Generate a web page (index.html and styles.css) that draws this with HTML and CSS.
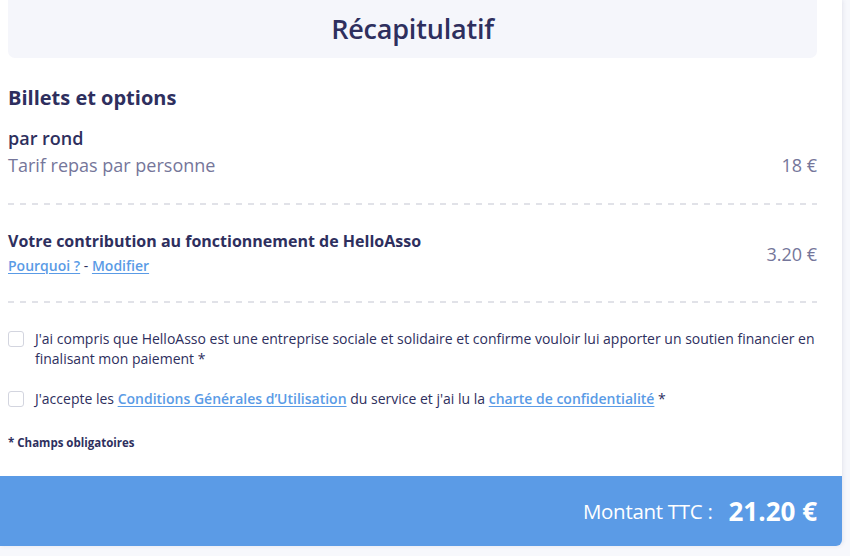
FILE: index.html
```html
<!DOCTYPE html>
<html lang="fr">
<head>
<meta charset="utf-8">
<link rel="stylesheet" href="styles.css">
</head>
<body>
<div class="card">
  <div class="header"><h1 class="title">Récapitulatif</h1></div>
  <div class="content">
    <h2 class="section-title">Billets et options</h2>
    <div class="item">
      <div class="item-name">par rond</div>
      <div class="row">
        <span class="muted">Tarif repas par personne</span>
        <span class="muted">18 €</span>
      </div>
    </div>
    <div class="dash dash-first"></div>
    <div class="row contrib">
      <div>
        <div class="contrib-title">Votre contribution au fonctionnement de HelloAsso</div>
        <div class="links"><a href="#">Pourquoi ?</a> - <a href="#">Modifier</a></div>
      </div>
      <span class="muted">3.20 €</span>
    </div>
    <div class="dash dash-second"></div>
    <label class="check">
      <span class="box"></span>
      <span class="check-text">J'ai compris que HelloAsso est une entreprise sociale et solidaire et confirme vouloir lui apporter un soutien financier en finalisant mon paiement *</span>
    </label>
    <label class="check">
      <span class="box"></span>
      <span class="check-text">J'accepte les <a href="#">Conditions Générales d’Utilisation</a> du service et j'ai lu la <a href="#">charte de confidentialité</a> *</span>
    </label>
    <p class="required">* Champs obligatoires</p>
  </div>
  <div class="footer">
    <span class="total-label">Montant TTC :</span>
    <span class="total-value">21.20 €</span>
  </div>
</div>
</body>
</html>
```
FILE: styles.css
```css
* { box-sizing: border-box; }
html, body { margin: 0; padding: 0; }
body {
  background: #f7f8fc;
  font-family: "Open Sans", "Noto Sans", sans-serif;
  color: #2e2f5e;
  width: 850px;
  height: 556px;
  overflow: hidden;
}
.card {
  width: 842px;
  background: #fff;
  box-shadow: 1px 0 4px rgba(46, 47, 94, 0.10);
  border-radius: 0 0 6px 0;
}
.header {
  margin: 0 25px 0 8px;
  height: 58px;
  background: #f5f6fb;
  border-radius: 0 0 7px 7px;
  display: flex;
  align-items: center;
  justify-content: center;
}
.title {
  margin: 0;
  font-size: 27px;
  font-weight: 600;
  line-height: 34px;
  color: #2e2f5e;
  letter-spacing: -0.2px;
}
.content {
  padding: 27px 25px 25px 8px;
}
.section-title {
  margin: 0;
  font-size: 20px;
  line-height: 26px;
  font-weight: 700;
}
.item { margin-top: 13px; }
.item-name {
  font-size: 18px;
  font-weight: 600;
  line-height: 28px;
}
.row {
  display: flex;
  justify-content: space-between;
  align-items: center;
}
.muted {
  font-size: 18px;
  line-height: 27px;
  color: #75769a;
}
.dash {
  height: 2px;
  background: linear-gradient(to right, #e1e2e8 0 6px, transparent 6px 12px) repeat-x;
  background-size: 12px 2px;
}
.dash-first { margin: 24px 0 25px; }
.dash-second { margin: 23px 0 26px; }
.contrib-title {
  font-size: 16px;
  font-weight: 700;
  line-height: 22px;
}
.links {
  margin-top: 2px;
  font-size: 14px;
  line-height: 24px;
  color: #2e2f5e;
}
.links a, .check-text a {
  color: #5a9be6;
  font-weight: 600;
  text-decoration: underline;
  text-underline-offset: 2px;
}
.check {
  display: flex;
  align-items: flex-start;
  gap: 11px;
  margin-bottom: 20px;
}
.box {
  flex: none;
  width: 16px;
  height: 16px;
  margin-top: 2px;
  border: 1px solid #d3d5df;
  border-radius: 3px;
  background: #fff;
}
.check-text {
  font-size: 14px;
  line-height: 20px;
  color: #2e2f5e;
}
.required {
  margin: 26px 0 0;
  font-size: 11.5px;
  font-weight: 700;
  line-height: 16px;
}
.footer {
  height: 70px;
  background: #5b9be6;
  border-radius: 0 0 6px 0;
  display: flex;
  align-items: center;
  justify-content: flex-end;
  gap: 16px;
  padding: 0 25px 0 8px;
  color: #fff;
}
.total-label {
  font-size: 20.5px;
  line-height: 28px;
  letter-spacing: -0.3px;
}
.total-value {
  font-size: 26px;
  font-weight: 700;
  line-height: 34px;
}
```
